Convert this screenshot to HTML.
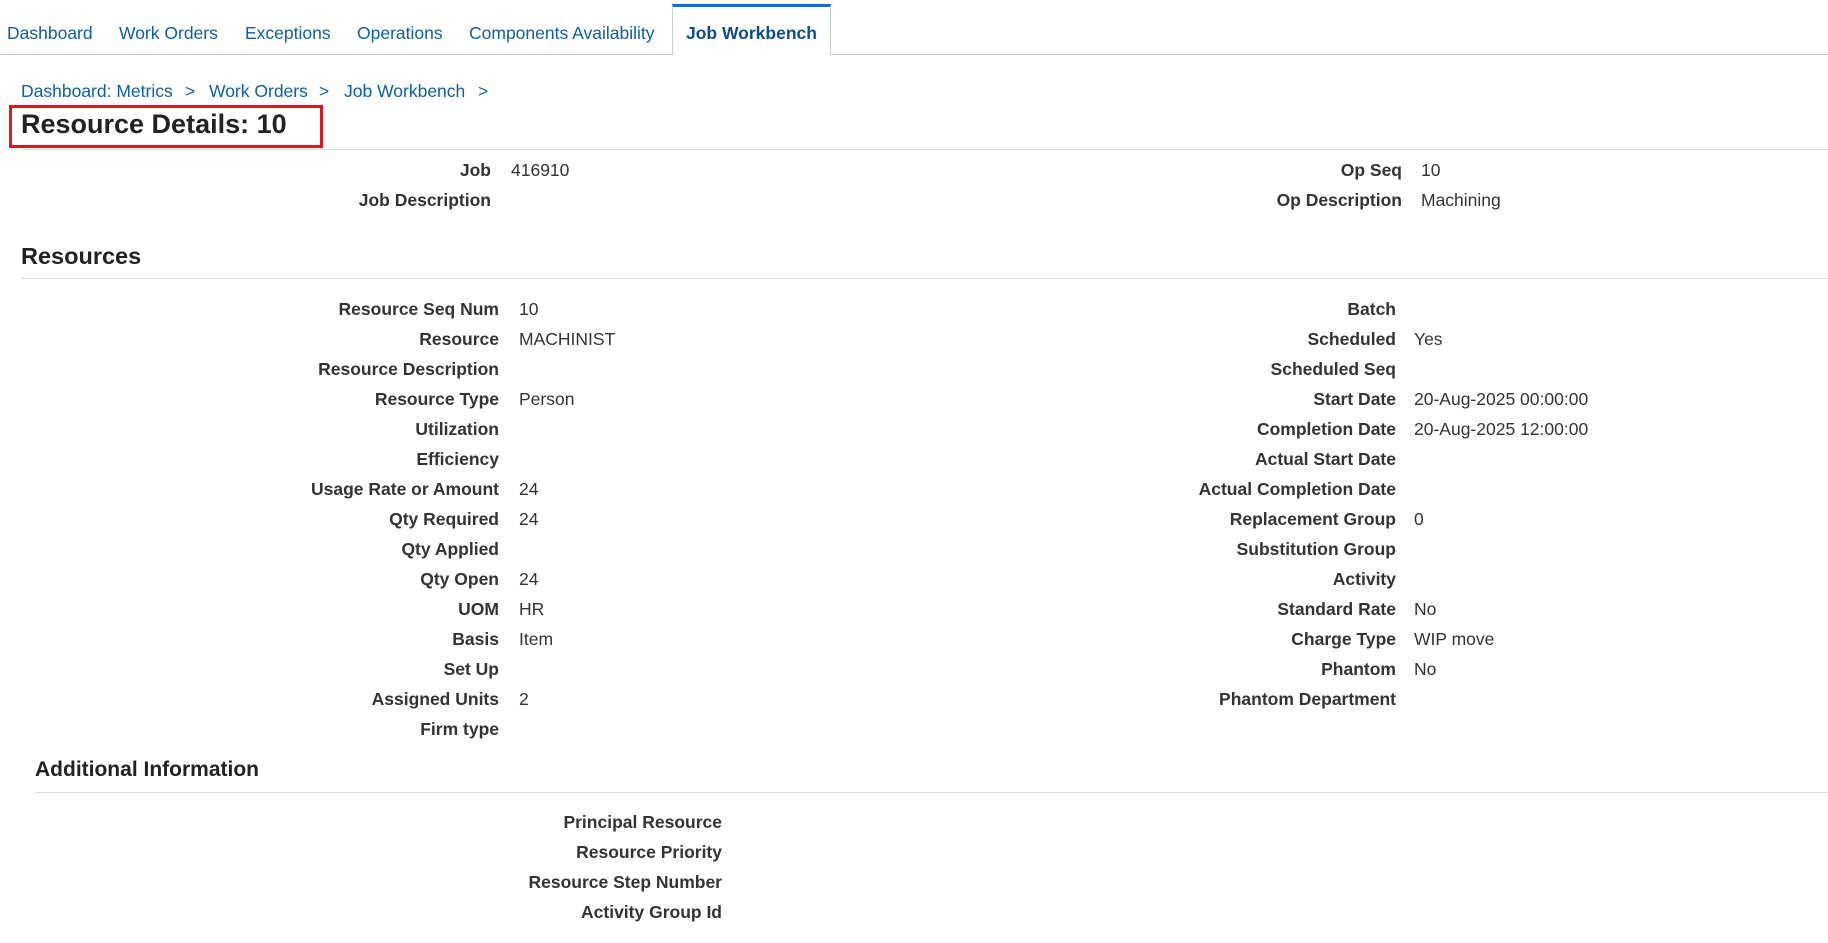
<!DOCTYPE html>
<html><head><meta charset="utf-8"><style>
body{margin:0;width:1828px;height:943px;background:#fff;font-family:"Liberation Sans",Arial,sans-serif;position:relative;overflow:hidden;color:#333}
.a{position:absolute;white-space:nowrap;line-height:20px}
.t{font-size:17.5px;color:#0b5fa5;top:23px}
.b{font-size:17.5px;color:#0b5fa5;top:81px}
.l{font-weight:bold;font-size:17.5px;color:#333;text-align:right;width:400px}
.v{font-size:17.5px;color:#333}
.hr{position:absolute;height:1px;background:#d6dfe6;right:0}
</style></head><body>
<div class="hr" style="left:0;top:54px;background:#c4ced7"></div>
<div style="position:absolute;left:672px;top:4px;width:159px;height:51px;background:#fff;border-left:1px solid #c4ced7;border-right:1px solid #c4ced7;border-top:3px solid #0572ce;box-sizing:border-box"></div>
<div class="a t" style="left:7px">Dashboard</div>
<div class="a t" style="left:119px">Work Orders</div>
<div class="a t" style="left:245px">Exceptions</div>
<div class="a t" style="left:357px">Operations</div>
<div class="a t" style="left:469px">Components Availability</div>
<div class="a t" style="left:686px;font-weight:bold;color:#0b4f8a">Job Workbench</div>

<div class="a b" style="left:21px">Dashboard: Metrics</div>
<div class="a b" style="left:185px">&gt;</div>
<div class="a b" style="left:209px">Work Orders</div>
<div class="a b" style="left:319px">&gt;</div>
<div class="a b" style="left:344px">Job Workbench</div>
<div class="a b" style="left:478px">&gt;</div>
<div style="position:absolute;left:9px;top:105px;width:314px;height:43px;border:3px solid #e0141e;box-sizing:border-box"></div>
<div class="a" style="left:21px;top:109px;font-size:27px;font-weight:bold;color:#222;line-height:30px">Resource Details: 10</div>
<div class="hr" style="left:21px;top:149px"></div>

<div class="a l" style="left:91px;top:160px">Job</div><div class="a v" style="left:511px;top:160px">416910</div>
<div class="a l" style="left:91px;top:190px">Job Description</div>
<div class="a l" style="left:1002px;top:160px">Op Seq</div><div class="a v" style="left:1421px;top:160px">10</div>
<div class="a l" style="left:1002px;top:190px">Op Description</div><div class="a v" style="left:1421px;top:190px">Machining</div>

<div class="a" style="left:21px;top:243px;font-size:23.5px;font-weight:bold;color:#222;line-height:26px">Resources</div>
<div class="hr" style="left:21px;top:278px"></div>

<div class="a l" style="left:99px;top:299px">Resource Seq Num</div><div class="a v" style="left:519px;top:299px">10</div>
<div class="a l" style="left:99px;top:329px">Resource</div><div class="a v" style="left:519px;top:329px">MACHINIST</div>
<div class="a l" style="left:99px;top:359px">Resource Description</div>
<div class="a l" style="left:99px;top:389px">Resource Type</div><div class="a v" style="left:519px;top:389px">Person</div>
<div class="a l" style="left:99px;top:419px">Utilization</div>
<div class="a l" style="left:99px;top:449px">Efficiency</div>
<div class="a l" style="left:99px;top:479px">Usage Rate or Amount</div><div class="a v" style="left:519px;top:479px">24</div>
<div class="a l" style="left:99px;top:509px">Qty Required</div><div class="a v" style="left:519px;top:509px">24</div>
<div class="a l" style="left:99px;top:539px">Qty Applied</div>
<div class="a l" style="left:99px;top:569px">Qty Open</div><div class="a v" style="left:519px;top:569px">24</div>
<div class="a l" style="left:99px;top:599px">UOM</div><div class="a v" style="left:519px;top:599px">HR</div>
<div class="a l" style="left:99px;top:629px">Basis</div><div class="a v" style="left:519px;top:629px">Item</div>
<div class="a l" style="left:99px;top:659px">Set Up</div>
<div class="a l" style="left:99px;top:689px">Assigned Units</div><div class="a v" style="left:519px;top:689px">2</div>
<div class="a l" style="left:99px;top:719px">Firm type</div>

<div class="a l" style="left:996px;top:299px">Batch</div>
<div class="a l" style="left:996px;top:329px">Scheduled</div><div class="a v" style="left:1414px;top:329px">Yes</div>
<div class="a l" style="left:996px;top:359px">Scheduled Seq</div>
<div class="a l" style="left:996px;top:389px">Start Date</div><div class="a v" style="left:1414px;top:389px">20-Aug-2025 00:00:00</div>
<div class="a l" style="left:996px;top:419px">Completion Date</div><div class="a v" style="left:1414px;top:419px">20-Aug-2025 12:00:00</div>
<div class="a l" style="left:996px;top:449px">Actual Start Date</div>
<div class="a l" style="left:996px;top:479px">Actual Completion Date</div>
<div class="a l" style="left:996px;top:509px">Replacement Group</div><div class="a v" style="left:1414px;top:509px">0</div>
<div class="a l" style="left:996px;top:539px">Substitution Group</div>
<div class="a l" style="left:996px;top:569px">Activity</div>
<div class="a l" style="left:996px;top:599px">Standard Rate</div><div class="a v" style="left:1414px;top:599px">No</div>
<div class="a l" style="left:996px;top:629px">Charge Type</div><div class="a v" style="left:1414px;top:629px">WIP move</div>
<div class="a l" style="left:996px;top:659px">Phantom</div><div class="a v" style="left:1414px;top:659px">No</div>
<div class="a l" style="left:996px;top:689px">Phantom Department</div>

<div class="a" style="left:35px;top:758px;font-size:21px;font-weight:bold;color:#222;line-height:24px">Additional Information</div>
<div class="hr" style="left:35px;top:792px"></div>
<div class="a l" style="left:322px;top:812px">Principal Resource</div>
<div class="a l" style="left:322px;top:842px">Resource Priority</div>
<div class="a l" style="left:322px;top:872px">Resource Step Number</div>
<div class="a l" style="left:322px;top:902px">Activity Group Id</div>
</body></html>
